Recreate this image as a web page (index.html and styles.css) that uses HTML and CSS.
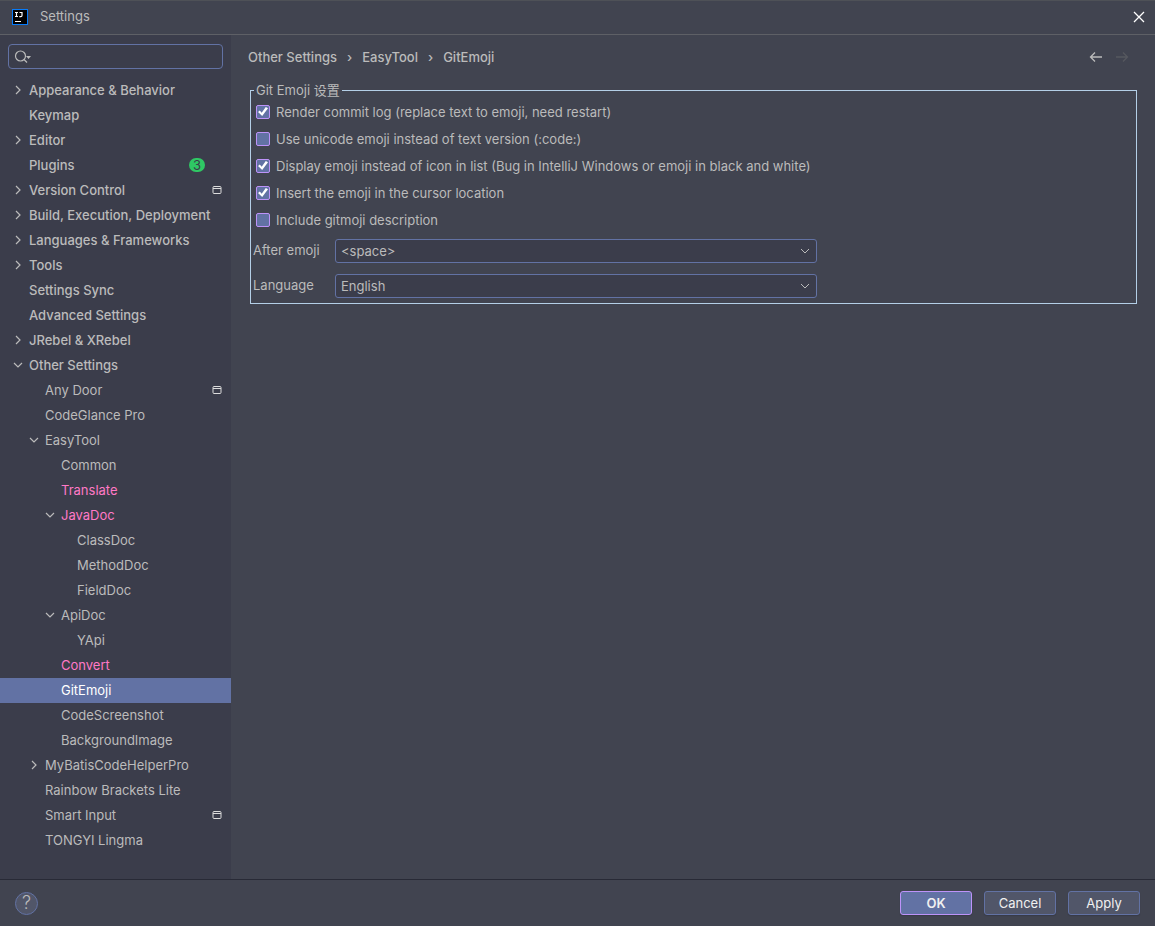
FILE: index.html
```html
<!DOCTYPE html>
<html lang="en">
<head>
<meta charset="utf-8">
<meta name="viewport" content="width=device-width, initial-scale=1">
<title>Settings</title>
<link rel="stylesheet" href="styles.css">
</head>
<body>
<svg class="defs" aria-hidden="true">
  <symbol id="right" viewBox="0 0 12 12"><path d="M4 2l4 4-4 4"/></symbol>
  <symbol id="down" viewBox="0 0 12 12"><path d="M2 4l4 4 4-4"/></symbol>
  <symbol id="project" viewBox="0 0 10 10"><path d="M2 1.5h6q1 0 1 1v5q0 1-1 1h-6q-1 0-1-1v-5q0-1 1-1zM1 3.5h8"/></symbol>
</svg>
<header class="titlebar">
  <svg class="logo" viewBox="0 0 16 16" aria-hidden="true"><rect width="16" height="16" fill="#087cfa"/><rect x="1" y="1" width="14" height="14" fill="#000"/><path d="M3 3.5h3M4.500 3v5M3 7.500h3M7.500 3.500h3M10 3v3.500q0 1.200-1.200 1.200h-1.500M3 12.500h6" fill="none" stroke="#fff" stroke-width="1.200"/></svg>
  <h1 class="title">Settings</h1>
  <button class="icon-button close" aria-label="Close"><svg viewBox="0 0 12 12"><path d="M1 1l10 10M11 1L1 11"/></svg></button>
</header>
<div class="body">
  <aside class="sidebar">
    <div class="search">
      <svg class="search-icon" viewBox="0 0 18 16" aria-hidden="true"><circle cx="6.500" cy="7" r="5"/><path d="M10 10.500l3 3"/><path class="solid" d="M12 7h5l-2.500 3z"/></svg>
      <input class="search-input" type="text" aria-label="Search settings">
    </div>
    <nav aria-label="Settings categories">
      <ul class="tree">
        <li><button class="row top"><svg class="chevron"><use href="#right"/></svg>Appearance &amp; Behavior</button></li>
        <li><button class="row top"><span class="chevron"></span>Keymap</button></li>
        <li><button class="row top"><svg class="chevron"><use href="#right"/></svg>Editor</button></li>
        <li><button class="row top"><span class="chevron"></span>Plugins<span class="count">3</span></button></li>
        <li><button class="row top"><svg class="chevron"><use href="#right"/></svg>Version Control<svg class="project"><use href="#project"/></svg></button></li>
        <li><button class="row top"><svg class="chevron"><use href="#right"/></svg>Build, Execution, Deployment</button></li>
        <li><button class="row top"><svg class="chevron"><use href="#right"/></svg>Languages &amp; Frameworks</button></li>
        <li><button class="row top"><svg class="chevron"><use href="#right"/></svg>Tools</button></li>
        <li><button class="row top"><span class="chevron"></span>Settings Sync</button></li>
        <li><button class="row top"><span class="chevron"></span>Advanced Settings</button></li>
        <li><button class="row top"><svg class="chevron"><use href="#right"/></svg>JRebel &amp; XRebel</button></li>
        <li><button class="row top" aria-expanded="true"><svg class="chevron"><use href="#down"/></svg>Other Settings</button>
          <ul class="level-1">
            <li><button class="row"><span class="chevron"></span>Any Door<svg class="project"><use href="#project"/></svg></button></li>
            <li><button class="row"><span class="chevron"></span>CodeGlance Pro</button></li>
            <li><button class="row" aria-expanded="true"><svg class="chevron"><use href="#down"/></svg>EasyTool</button>
              <ul class="level-2">
                <li><button class="row"><span class="chevron"></span>Common</button></li>
                <li><button class="row modified"><span class="chevron"></span>Translate</button></li>
                <li><button class="row modified" aria-expanded="true"><svg class="chevron"><use href="#down"/></svg>JavaDoc</button>
                  <ul class="level-3">
                    <li><button class="row"><span class="chevron"></span>ClassDoc</button></li>
                    <li><button class="row"><span class="chevron"></span>MethodDoc</button></li>
                    <li><button class="row"><span class="chevron"></span>FieldDoc</button></li>
                  </ul></li>
                <li><button class="row" aria-expanded="true"><svg class="chevron"><use href="#down"/></svg>ApiDoc</button>
                  <ul class="level-3">
                    <li><button class="row"><span class="chevron"></span>YApi</button></li>
                  </ul></li>
                <li><button class="row modified"><span class="chevron"></span>Convert</button></li>
                <li><button class="row selected" aria-current="page"><span class="chevron"></span>GitEmoji</button></li>
                <li><button class="row"><span class="chevron"></span>CodeScreenshot</button></li>
                <li><button class="row"><span class="chevron"></span>BackgroundImage</button></li>
              </ul></li>
            <li><button class="row"><svg class="chevron"><use href="#right"/></svg>MyBatisCodeHelperPro</button></li>
            <li><button class="row"><span class="chevron"></span>Rainbow Brackets Lite</button></li>
            <li><button class="row"><span class="chevron"></span>Smart Input<svg class="project"><use href="#project"/></svg></button></li>
            <li><button class="row"><span class="chevron"></span>TONGYI Lingma</button></li>
          </ul></li>
      </ul>
    </nav>
  </aside>
  <main class="content">
    <div class="heading">
      <nav class="crumbs" aria-label="Breadcrumb"><a href="#">Other Settings</a><span>›</span><a href="#">EasyTool</a><span>›</span><a href="#" aria-current="page">GitEmoji</a></nav>
      <button class="icon-button" aria-label="Back"><svg viewBox="0 0 14 12"><path d="M13 6H2M6 1.500L1.500 6 6 10.500"/></svg></button>
      <button class="icon-button" aria-label="Forward" disabled><svg viewBox="0 0 14 12"><path d="M1 6h11M8 1.500L12.500 6 8 10.500"/></svg></button>
    </div>
    <fieldset class="group">
      <legend>Git Emoji 设置</legend>
      <label class="check"><input type="checkbox" checked>Render commit log (replace text to emoji, need restart)</label>
      <label class="check"><input type="checkbox">Use unicode emoji instead of text version (:code:)</label>
      <label class="check"><input type="checkbox" checked>Display emoji instead of icon in list (Bug in IntelliJ Windows or emoji in black and white)</label>
      <label class="check"><input type="checkbox" checked>Insert the emoji in the cursor location</label>
      <label class="check"><input type="checkbox">Include gitmoji description</label>
      <div class="fields">
        <label for="after">After emoji</label>
        <div class="select"><select id="after"><option>&lt;space&gt;</option></select><svg aria-hidden="true"><use href="#down"/></svg></div>
        <label for="language">Language</label>
        <div class="select"><select id="language"><option>English</option></select><svg aria-hidden="true"><use href="#down"/></svg></div>
      </div>
    </fieldset>
  </main>
</div>
<footer class="footer">
  <button class="help" aria-label="Help">?</button>
  <button class="button primary">OK</button>
  <button class="button">Cancel</button>
  <button class="button">Apply</button>
</footer>
</body>
</html>
```
FILE: styles.css
```css
* { box-sizing: border-box; }
body {
  margin: 0;
  min-height: 100vh;
  display: flex;
  flex-direction: column;
  background: #414450;
  color: #bbbbbb;
  font: 13px/16px Inter, "Noto Sans CJK SC", sans-serif;
}
button, input, select { font: inherit; color: inherit; }
ul { list-style: none; margin: 0; padding: 0; }
svg { fill: none; stroke: currentColor; }
.defs { display: none; }

.titlebar {
  height: 35px;
  display: flex;
  align-items: center;
  gap: 12px;
  padding: 0 9px 2px 12px;
  border-top: 1px solid #4e5157;
  border-bottom: 1px solid #5e6066;
}
.logo { width: 16px; height: 16px; stroke: none; }
.title { margin: 0; padding-bottom: 2px; font-size: 13px; font-weight: 400; }
.icon-button {
  display: flex;
  padding: 0;
  border: 0;
  background: none;
}
.icon-button svg { width: 14px; height: 12px; stroke-width: 1.3; }
.icon-button:disabled { color: #56585f; }
.close { margin-left: auto; color: #fff; }

.body { flex: 1; display: flex; }
.sidebar { flex: 0 0 231px; min-width: 0; background: #3b3d4b; }
.search {
  display: flex;
  align-items: center;
  height: 25px;
  margin: 9px 8px;
  padding-left: 5px;
  border: 1px solid #6272a4;
  border-radius: 4px;
}
.search-icon { width: 18px; height: 16px; stroke-width: 1.2; }
.solid { fill: currentColor; stroke: none; }
.search-input {
  flex: 1;
  min-width: 0;
  border: 0;
  outline: 0;
  background: none;
}
.row {
  display: flex;
  align-items: center;
  width: 100%;
  height: 25px;
  padding: 0 9px 2px 12px;
  border: 0;
  background: none;
  text-align: left;
  white-space: nowrap;
}
.top { font-weight: 500; }
.level-1 .row { padding-left: 28px; }
.level-2 .row { padding-left: 44px; }
.level-3 .row { padding-left: 60px; }
.chevron { flex: none; width: 12px; height: 12px; margin-right: 5px; stroke-width: 1.2; }
.modified { color: #ff79c6; }
.modified .chevron { color: #bbbbbb; }
.selected { background: #6272a4; color: #fff; }
.project { flex: none; width: 10px; height: 10px; margin-left: auto; color: #dddddd; }
.count {
  width: 16px;
  height: 14px;
  margin: 0 17px 0 auto;
  border-radius: 7px;
  background: #2fc864;
  color: #3b3d4b;
  line-height: 14px;
  font-weight: 400;
  text-align: center;
}

.content { flex: 1; min-width: 0; padding: 14px 18px 0 19px; }
.heading { display: flex; align-items: center; gap: 12px; padding-right: 8px; height: 16px; }
.crumbs {
  flex: 1;
  display: flex;
  gap: 10px;
  margin-left: -2px;
  padding-bottom: 1px;
  font-weight: 500;
}
.crumbs a { color: inherit; text-decoration: none; }
.group {
  margin: 17px 0 0;
  padding: 0 2px 5px;
  border: 1px solid #b4cfe7;
}
.group legend { padding: 0 2px; margin-left: 1px; }
.check {
  display: flex;
  align-items: center;
  gap: 6px;
  height: 27px;
  padding-left: 3px;
}
.check input {
  appearance: none;
  display: grid;
  place-items: center;
  flex: none;
  width: 14px;
  height: 14px;
  margin: 0;
  border: 1px solid #bd93f9;
  border-radius: 2px;
  background: #6272a4;
}
.check input:checked::before {
  content: "";
  width: 10px;
  height: 10px;
  background: #fff;
  clip-path: polygon(0 55%, 18% 40%, 37% 63%, 78% 4%, 100% 18%, 42% 94%);
}
.fields {
  display: grid;
  grid-template-columns: 72px minmax(0, 482px);
  gap: 11px 10px;
  padding-top: 6px;
}
.fields label { line-height: 22px; }
.select { display: grid; align-items: center; }
.select > * { grid-area: 1 / 1; }
.select select {
  appearance: none;
  width: 100%;
  height: 24px;
  padding: 0 24px 0 5px;
  border: 1px solid #6272a4;
  border-radius: 3px;
  background: #3b3d4b;
}
.select svg { justify-self: end; width: 12px; height: 12px; margin-right: 6px; pointer-events: none; }

.footer {
  height: 47px;
  display: flex;
  align-items: center;
  gap: 12px;
  padding: 0 15px;
  border-top: 1px solid #282a36;
}
.help {
  width: 23px;
  height: 23px;
  margin-right: auto;
  padding: 0;
  border: 1px solid #6272a4;
  border-radius: 50%;
  background: #515669;
  font-size: 18px;
  font-weight: 300;
}
.button {
  width: 72px;
  height: 24px;
  padding: 0;
  border: 1px solid #6272a4;
  border-radius: 3px;
  background: #515669;
  color: #f0f0f0;
  box-shadow: 0 1px 1px #383b47;
}
.primary { border-color: #bd93f9; background: #6272a4; font-weight: 600; }
```
